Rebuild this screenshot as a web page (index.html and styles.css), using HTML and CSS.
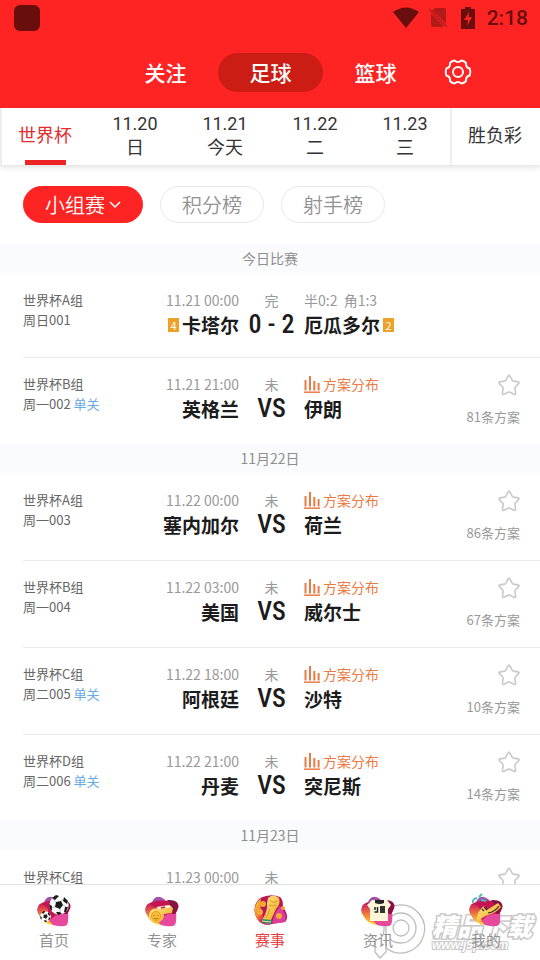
FILE: index.html
```html
<!DOCTYPE html>
<html lang="zh-CN">
<head>
<meta charset="utf-8">
<meta name="viewport" content="width=device-width, initial-scale=1">
<title>赛事</title>
<link rel="stylesheet" href="styles.css">
</head>
<body>
<svg class="defs" aria-hidden="true">
  <defs>
    <linearGradient id="flame" x1="0" y1="0" x2="1" y2="1">
      <stop offset="0" stop-color="#ffd92e"/><stop offset=".4" stop-color="#f58a2c"/><stop offset=".65" stop-color="#e01f66"/><stop offset="1" stop-color="#ee5aa8"/>
    </linearGradient>
    <linearGradient id="rim" x1="0" y1="0" x2="0" y2="1">
      <stop offset="0" stop-color="#d01f5c"/><stop offset=".5" stop-color="#f0803a"/><stop offset="1" stop-color="#ffd92e"/>
    </linearGradient>
    <linearGradient id="violet" x1="0" y1="0" x2="1" y2="1">
      <stop offset="0" stop-color="#8f52ad"/><stop offset="1" stop-color="#ea4fa0"/>
    </linearGradient>
    <linearGradient id="gold" x1="0" y1="0" x2="1" y2="1">
      <stop offset="0" stop-color="#ffe88a"/><stop offset="1" stop-color="#f3a51d"/>
    </linearGradient>
    <symbol id="blob" viewBox="0 0 34 32">
      <path d="M8 5Q12-1 19 4L31 16Q32 26 30 30Q27 32 21 31Q12 30 7 24Q3 14 8 5Z" fill="url(#violet)"/>
      <path d="M3 9Q12 3 30 7Q36 9 32 16Q27 26 18 29Q6 27 1 18Q-1 12 3 9Z" fill="#c51550"/>
      <path d="M22 5Q34 4 33 12Q31 19 27 22Q28 11 22 5Z" fill="#861442"/>
      <path d="M3 9Q-1 13 2 20Q6 29 16 30Q10 23 11 14Q7 9 3 9Z" fill="url(#rim)"/>
      <path d="M12 26Q20 17 30 19Q31 27 29 30Q18 32 12 26Z" fill="#e8489b"/>
    </symbol>
    <symbol id="ball" viewBox="0 0 20 20">
      <circle cx="10" cy="10" r="9.7" fill="#fff"/>
      <path d="M7 7l5-1 2 4-3 4-5-2zM3 3l4-3 3 1-4 4zM15 2l4 4-1 3-4-3zM0 9l3 2 0 5-2-2zM7 17l4 0 2 2-4 1zM16 12l3 0-2 5-2 0z" fill="#191919"/>
      <path d="M7 7L4 4M12 6l3-2M14 10l3 2M11 14v4M6 12l-4 1" stroke="#888" stroke-width=".6"/>
    </symbol>
    <symbol id="star" viewBox="0 0 24 24">
      <path d="M12 1.500Q12.700 1.500 13.100 2.300L15.600 7Q16 7.700 16.800 7.800L21.800 8.600Q23.600 9.100 22.400 10.500L18.900 14.200Q18.300 14.800 18.400 15.600L19.200 21Q19.200 22.900 17.600 22.200L13 20Q12 19.500 11 20L6.400 22.200Q4.800 22.900 4.800 21L5.600 15.600Q5.700 14.800 5.100 14.200L1.600 10.500Q.4 9.100 2.200 8.600L7.200 7.800Q8 7.700 8.400 7L10.900 2.300Q11.300 1.500 12 1.500Z" fill="none" stroke="#cacaca" stroke-width="1.800"/>
    </symbol>
    <symbol id="bars" viewBox="0 0 16 17">
      <path d="M1.500 4v10.500M6 0v14.500M10.300 5v9.500M14.600 7v7.500" fill="none" stroke="#e97b45" stroke-width="2"/><path d="M0 16.200h16" stroke="#e97b45" stroke-width="1.500"/>
    </symbol>
  </defs>
</svg>

<div class="app">
  <header class="top">
    <div class="status">
      <span class="status-app"></span>
      <svg width="26" height="22" viewBox="0 0 26 22"><path d="M0 5Q13-4 26 5L13 21Z" fill="#6a0d0d"/></svg>
      <svg class="sim" width="20" height="22" viewBox="0 0 20 22"><path d="M7 1h9q2 0 2 2v13.500L4 3.500ZM3 6l13 13q-1 1-2 1H5q-2 0-2-2Z" fill="#b51a1a"/><path d="M1 2l18 18" stroke="#b51a1a" stroke-width="1.500"/></svg>
      <svg class="battery" width="14" height="22" viewBox="0 0 14 22"><path d="M4 0h6v2h4v20H0V2h4Z" fill="#6a0d0d"/><path d="M8 5l-5 8h4l-1 6 5-9H7.500Z" fill="#ff2424"/></svg>
      <span class="clock">2:18</span>
    </div>
    <nav class="sports">
      <button type="button">关注</button>
      <button type="button" class="on">足球</button>
      <button type="button">篮球</button>
      <button type="button" class="gear" aria-label="设置">
        <svg width="28" height="26" viewBox="0 0 28 26" fill="none" stroke="#fff" stroke-width="1.900" stroke-linejoin="round"><path d="M10.500 1.500Q14 4.500 17.500 1.500Q20 1.800 22 4Q21.500 8.500 25.700 9.500Q27 13 25.700 16.500Q21.500 17.500 22 22Q20 24.200 17.500 24.500Q14 21.500 10.500 24.500Q8 24.200 6 22Q6.500 17.500 2.300 16.500Q1 13 2.300 9.500Q6.500 8.500 6 4Q8 1.800 10.500 1.500Z"/><circle cx="14" cy="13" r="5"/></svg>
      </button>
    </nav>
  </header>

  <nav class="dates">
    <button type="button" class="cup">世界杯</button>
    <button type="button">11.20<br>日</button>
    <button type="button">11.21<br>今天</button>
    <button type="button">11.22<br>二</button>
    <button type="button">11.23<br>三</button>
    <button type="button" class="lottery">胜负彩</button>
  </nav>

  <div class="filters">
    <button type="button" class="pill pill-on">小组赛<svg width="12" height="8" viewBox="0 0 12 8"><path d="M1 1l5 5 5-5" fill="none" stroke="#fff" stroke-width="1.500"/></svg></button>
    <button type="button" class="pill">积分榜</button>
    <button type="button" class="pill">射手榜</button>
  </div>

  <main class="list">
    <section class="day today">
      <h2>今日比赛</h2>
      <article class="match">
        <div class="group">世界杯A组<br>周日001</div>
        <div class="home"><span class="meta">11.21 00:00</span><span class="team"><i class="card">4</i>卡塔尔</span></div>
        <div class="mid"><span class="meta">完</span><b>0 - 2</b></div>
        <div class="away"><span class="meta">半0:2&nbsp; 角1:3</span><span class="team">厄瓜多尔<i class="card">2</i></span></div>
      </article>
      <article class="match">
        <div class="group">世界杯B组<br>周一002 <a href="#">单关</a></div>
        <div class="home"><span class="meta">11.21 21:00</span><span class="team">英格兰</span></div>
        <div class="mid"><span class="meta">未</span><b>VS</b></div>
        <div class="away"><a class="meta plan" href="#"><svg width="16" height="17"><use href="#bars"/></svg>方案分布</a><span class="team">伊朗</span></div>
        <div class="side"><button type="button" aria-label="收藏"><svg width="22" height="22"><use href="#star"/></svg></button><span>81条方案</span></div>
      </article>
    </section>
    <section class="day">
      <h2>11月22日</h2>
      <article class="match">
        <div class="group">世界杯A组<br>周一003</div>
        <div class="home"><span class="meta">11.22 00:00</span><span class="team">塞内加尔</span></div>
        <div class="mid"><span class="meta">未</span><b>VS</b></div>
        <div class="away"><a class="meta plan" href="#"><svg width="16" height="17"><use href="#bars"/></svg>方案分布</a><span class="team">荷兰</span></div>
        <div class="side"><button type="button" aria-label="收藏"><svg width="22" height="22"><use href="#star"/></svg></button><span>86条方案</span></div>
      </article>
      <article class="match">
        <div class="group">世界杯B组<br>周一004</div>
        <div class="home"><span class="meta">11.22 03:00</span><span class="team">美国</span></div>
        <div class="mid"><span class="meta">未</span><b>VS</b></div>
        <div class="away"><a class="meta plan" href="#"><svg width="16" height="17"><use href="#bars"/></svg>方案分布</a><span class="team">威尔士</span></div>
        <div class="side"><button type="button" aria-label="收藏"><svg width="22" height="22"><use href="#star"/></svg></button><span>67条方案</span></div>
      </article>
      <article class="match">
        <div class="group">世界杯C组<br>周二005 <a href="#">单关</a></div>
        <div class="home"><span class="meta">11.22 18:00</span><span class="team">阿根廷</span></div>
        <div class="mid"><span class="meta">未</span><b>VS</b></div>
        <div class="away"><a class="meta plan" href="#"><svg width="16" height="17"><use href="#bars"/></svg>方案分布</a><span class="team">沙特</span></div>
        <div class="side"><button type="button" aria-label="收藏"><svg width="22" height="22"><use href="#star"/></svg></button><span>10条方案</span></div>
      </article>
      <article class="match">
        <div class="group">世界杯D组<br>周二006 <a href="#">单关</a></div>
        <div class="home"><span class="meta">11.22 21:00</span><span class="team">丹麦</span></div>
        <div class="mid"><span class="meta">未</span><b>VS</b></div>
        <div class="away"><a class="meta plan" href="#"><svg width="16" height="17"><use href="#bars"/></svg>方案分布</a><span class="team">突尼斯</span></div>
        <div class="side"><button type="button" aria-label="收藏"><svg width="22" height="22"><use href="#star"/></svg></button><span>14条方案</span></div>
      </article>
    </section>
    <section class="day">
      <h2>11月23日</h2>
      <article class="match">
        <div class="group">世界杯C组</div>
        <div class="home"><span class="meta">11.23 00:00</span></div>
        <div class="mid"><span class="meta">未</span></div>
        <div class="away"></div>
        <div class="side"><button type="button" aria-label="收藏"><svg width="22" height="22"><use href="#star"/></svg></button></div>
      </article>
    </section>
  </main>

  <nav class="tabs">
    <a href="#"><svg width="34" height="32" viewBox="0 0 34 32"><use href="#blob" width="34" height="32"/><use href="#ball" x="12" y="0" width="20" height="20"/><use href="#ball" x="3" y="16" width="11" height="11"/></svg>首页</a>
    <a href="#"><svg width="34" height="32" viewBox="0 0 34 32"><use href="#blob" width="34" height="32"/><path d="M8 14l16-3 4 2-1 5-8 1q0 8-8 9-7-1-7-7 0-5 4-7Z" fill="url(#gold)"/><path d="M11 12l13-2 3 2-13 2Z" fill="#fff3d0"/><circle cx="11" cy="21" r="4.500" fill="#f9bd3a" stroke="#e89a1c"/><path d="M9 20v1M13 20v1M9 23q2 2 4 0" stroke="#b96a10" fill="none"/><path d="M16 13l4-1" stroke="#c51550" stroke-width="1.500"/></svg>专家</a>
    <a href="#" class="on"><svg width="34" height="32" viewBox="0 0 34 32"><path d="M7 3Q18-2 27 2Q30 4 30 12Q37 22 32 27L18 29Q12 32 5 25Q-3 13 7 3Z" fill="#b81556"/><path d="M8 3Q-2 12 4 24Q9 31 18 30Q5 22 8 3Z" fill="url(#flame)"/><path d="M27 11Q35 20 32 27L19 29Q21 18 27 11Z" fill="#dc3f9b"/><g fill="#f2a83b"><circle cx="10" cy="9" r="3"/><circle cx="7" cy="17" r="3"/><circle cx="26" cy="21" r="3"/><circle cx="30" cy="13" r="2"/></g><path d="M15 3Q20-2 26 3Q28 9 23 14L18 25H9Q15 16 14 8Z" fill="url(#gold)"/><path d="M17 5q3 4 7 1M16 10q4 2 7 0M17 14l-4 9" stroke="#d99822" fill="none"/><path d="M9 24l10 1-1 4-9-1Z" fill="#2f8f70"/><path d="M9 26l9 1" stroke="#f3df8d"/></svg>赛事</a>
    <a href="#"><svg width="34" height="32" viewBox="0 0 34 32"><use href="#blob" width="34" height="32"/><path d="M11 5l3 0h9l3 0 4 5-3 4v12H9V14L6 10Z" fill="#fff6d8"/><path d="M14 5h9v3q-4 2-9 0Z" fill="#222"/><path d="M14 12v3M16.500 12v5h-3" stroke="#222" stroke-width="1.500" fill="none"/><path d="M19 11h5v7h-5Z" fill="#333"/></svg>资讯</a>
    <a href="#"><svg width="34" height="32" viewBox="0 0 34 32"><use href="#blob" width="34" height="32"/><path d="M7 25Q9 15 15 11l3 4 11-7 3 4Q27 18 19 20Q13 22 9 27Z" fill="url(#gold)"/><path d="M13 14l2 2M15 12l3 3M19 18q7-1 11-7" stroke="#292929" stroke-width="1.200" fill="none"/><path d="M8 3q-5 1-4 5M10 2l3-3M12 5l5 1" stroke="#51b9be" stroke-width="2" fill="none"/></svg>我的</a>
    <div class="mark" aria-hidden="true">
      <svg width="52" height="58" viewBox="0 0 52 58" fill="#fff" fill-opacity=".4" stroke="#bdbdbd" stroke-width="1.300"><path d="M3 10Q12 3 27 3A24 24 0 1 1 14 46V50L8 56L3 50V38Q13 37 12 24"/><path d="M14 44V26A15 15 0 1 1 29 41Q22 41 18 37" fill="none"/><circle cx="29" cy="26" r="8" fill="none"/></svg>
      <div class="mark-text"><strong>精品下载</strong><span>www.j9p.com</span></div>
    </div>
  </nav>
</div>
</body>
</html>
```

FILE: styles.css
```css
* { box-sizing: border-box; }

body {
  margin: 0;
  background: #fff;
  color: #1c1c1c;
  font-family: "Noto Sans CJK SC", "Noto Sans", sans-serif;
}

button {
  margin: 0;
  padding: 0;
  border: 0;
  background: none;
  color: inherit;
  font: inherit;
}

a { color: inherit; text-decoration: none; }
svg { display: block; flex: none; overflow: visible; }
.defs { position: absolute; width: 0; height: 0; }

.app {
  display: flex;
  flex-direction: column;
  height: 100vh;
}

.top { flex: none; background: #ff2424; color: #fff; }

.status {
  display: flex;
  align-items: center;
  height: 36px;
  padding: 0 12px 0 14px;
  color: #6a0d0d;
}
.status-app {
  width: 26px;
  height: 26px;
  margin-right: auto;
  border-radius: 6px;
  background: #6a0d0d;
}
.sim { margin-left: 9px; }
.battery { margin: 0 12px 0 13px; }
.clock { font: 500 21px/26px Roboto, sans-serif; }

.sports {
  display: grid;
  grid-template-columns: 105px 105px 105px 60px;
  justify-content: end;
  align-items: center;
  height: 72px;
  padding-right: 52px;
  font-size: 21px;
  font-weight: 500;
}
.sports button { height: 39px; line-height: 39px; }
.sports .on { border-radius: 20px; background: #cb1d14; }
.sports .gear { display: grid; place-items: center; }

.dates {
  position: relative;
  display: grid;
  grid-template-columns: repeat(6, 1fr);
  flex: none;
  height: 57px;
  box-shadow: 0 2px 6px #0002;
  font: 18px/24px Roboto, "Noto Sans CJK SC", sans-serif;
  color: #333;
}
.dates button { padding-bottom: 2px; }
.dates .cup {
  display: flex;
  flex-direction: column;
  align-items: center;
  justify-content: space-between;
  padding: 16px 2px 0 0;
  border-left: 2px solid #eee;
  color: #e52b2b;
}
.cup::after { content: ""; width: 41px; height: 5px; background: #ed2424; }
.dates .lottery { padding-right: 2px; border-left: 2px solid #eee; }

.filters { display: flex; flex: none; gap: 17px; padding: 21px 23px; }
.pill {
  display: flex;
  align-items: center;
  justify-content: center;
  gap: 4px;
  width: 104px;
  height: 37px;
  border: 1px solid #e8e8e8;
  border-radius: 19px;
  color: #929292;
  font-size: 20px;
  font-weight: 350;
}
.pill-on { width: 120px; border-color: #ff2424; background: #ff2424; color: #fff; }

.list { flex: 1; min-height: 0; overflow-y: auto; scrollbar-width: none; }
.day h2 {
  margin: 0;
  background: #fafbfd;
  color: #8f8f8f;
  font-size: 14px;
  font-weight: 400;
  line-height: 29px;
  text-align: center;
}

.match {
  display: grid;
  grid-template-columns: 80px 1fr 65px 1fr 80px;
  height: 87px;
  margin-left: 23px;
  padding: 17px 20px 0 0;
}
.match + .match { padding-top: 16px; border-top: 1px solid #ececec; }
.today .match:first-of-type { height: 84px; }

.group { color: #666; font-size: 13px; line-height: 20px; white-space: nowrap; }
.group a { color: #68aae6; }
.home, .mid, .away { display: flex; flex-direction: column; }
.home { align-items: flex-end; }
.mid { align-items: center; }
.away { align-items: flex-start; }
.meta { color: #999; font-size: 14px; line-height: 20px; white-space: nowrap; }
.team {
  display: flex;
  align-items: center;
  gap: 3px;
  font-size: 19px;
  font-weight: 700;
  line-height: 30px;
  white-space: nowrap;
}
.card {
  width: 11px;
  background: #eda128;
  color: #fff;
  font-size: 11px;
  font-style: normal;
  font-weight: 400;
  line-height: 14px;
  text-align: center;
}
.mid b {
  font: 500 26px/28px "Roboto Condensed", "Liberation Sans Narrow", Roboto, sans-serif;
  white-space: nowrap;
}
.plan { display: flex; align-items: center; gap: 3px; color: #e97b45; }
.side {
  display: flex;
  flex-direction: column;
  align-items: flex-end;
  gap: 11px;
  color: #999;
  font-size: 13px;
  line-height: 20px;
}

.tabs {
  position: relative;
  display: grid;
  grid-template-columns: repeat(5, 1fr);
  flex: none;
  height: 76px;
  border-top: 1px solid #e3e3e3;
  background: #fff;
  color: #929292;
  font-size: 15px;
  line-height: 22px;
}
.tabs a {
  z-index: 1;
  display: flex;
  flex-direction: column;
  align-items: center;
  gap: 2px;
  padding-top: 10px;
}
.tabs .on { color: #e83e3e; }

.mark {
  position: absolute;
  right: 8px;
  bottom: 0;
  display: flex;
  gap: 8px;
  pointer-events: none;
}
.mark-text {
  display: flex;
  flex-direction: column;
  padding-top: 9px;
  color: #fff;
  font-style: italic;
  -webkit-text-stroke: 3px #c8c8c8;
  paint-order: stroke fill;
}
.mark strong { font-size: 25px; font-weight: 900; line-height: 28px; }
.mark span { font: italic 700 12px/12px "Liberation Sans", sans-serif; -webkit-text-stroke-width: 2px; }
```
